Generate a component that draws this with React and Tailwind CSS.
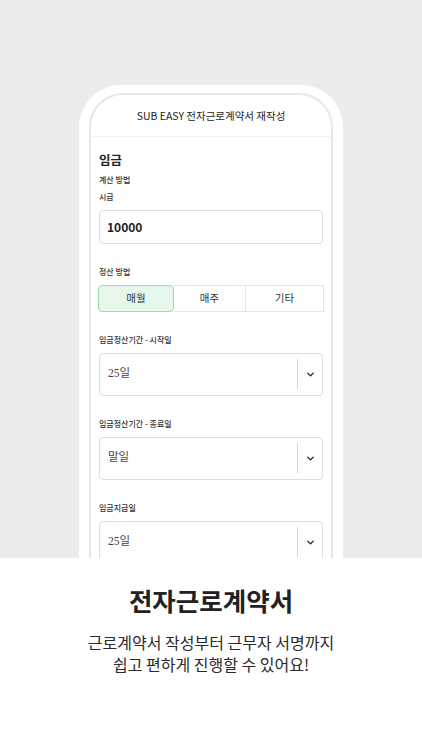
import { ChevronDown } from "lucide-react";

const sans = { fontFamily: '"Noto Sans CJK KR", "Noto Sans", sans-serif' };

function Label({ children, className = "" }) {
  return <div className={`text-[8px] font-medium text-[#333] leading-none ${className}`}>{children}</div>;
}

function SelectBox({ value, className = "" }) {
  return (
    <div className={`h-[43px] rounded-[4px] border border-[#dcdde0] bg-white flex items-center ${className}`}>
      <div
        className="flex-1 pl-[8px] text-[11.5px] text-[#444]"
        style={{ fontFamily: '"Liberation Serif", "Noto Sans CJK KR", serif' }}
      >
        {value}
      </div>
      <div className="w-px h-[30px] bg-[#d6d7da]" />
      <div className="w-[24px] flex justify-center">
        <ChevronDown size={11} strokeWidth={3} className="text-[#222]" />
      </div>
    </div>
  );
}

export default function App() {
  return (
    <div className="w-[422px] h-[750px] flex flex-col bg-white overflow-hidden" style={sans}>
      {/* phone mockup */}
      <div className="h-[558px] bg-[#ebecee] flex justify-center pt-[85px] overflow-hidden">
        <div className="w-[264px] h-[520px] bg-white rounded-t-[42px] pt-[8px] px-[10px] shrink-0">
          <div className="h-full rounded-t-[34px] border-x-[2px] border-t-[2px] border-[#e6e7ea] bg-white overflow-hidden">
            <div className="h-[42px] flex items-center justify-center border-b border-[#f1f1f3] text-[10.5px] text-[#222] pt-[1px]">
              SUB EASY 전자근로계약서 재작성
            </div>
            <div className="px-[8px] pt-[17px]">
              <div className="text-[12.5px] font-bold text-[#222] leading-none">임금</div>
              <Label className="mt-[9px]">계산 방법</Label>
              <Label className="mt-[9px]">시급</Label>
              <div className="mt-[9px] h-[34px] rounded-[4px] border border-[#dcdde0] flex items-center pl-[7px] text-[12px] font-bold text-[#222]">
                10000
              </div>
              <Label className="mt-[24px]">정산 방법</Label>
              <div className="mt-[9px] flex h-[27px] -mx-[1px] text-[10.5px] text-[#333]">
                <div className="w-[76px] flex items-center justify-center rounded-[4px] border border-[#9fd9b4] bg-[#e6f7ec]">매월</div>
                <div className="w-[72px] flex items-center justify-center border-y border-r border-[#e4e5e8]">매주</div>
                <div className="flex-1 flex items-center justify-center border-y border-r border-[#e4e5e8]">기타</div>
              </div>
              <Label className="mt-[24px]">임금정산기간 - 시작일</Label>
              <SelectBox value="25일" className="mt-[9px]" />
              <Label className="mt-[24px]">임금정산기간 - 종료일</Label>
              <SelectBox value="말일" className="mt-[9px]" />
              <Label className="mt-[24px]">임금지급일</Label>
              <SelectBox value="25일" className="mt-[9px]" />
            </div>
          </div>
        </div>
      </div>
      {/* caption */}
      <div className="flex-1 flex flex-col items-center pt-[24px] text-[#222]">
        <div className="text-[25.5px] font-bold leading-[36px]">전자근로계약서</div>
        <div className="mt-[13px] text-[16px] leading-[22px] text-center text-[#2a2a2a]">
          <div>근로계약서 작성부터 근무자 서명까지</div>
          <div>쉽고 편하게 진행할 수 있어요!</div>
        </div>
      </div>
    </div>
  );
}
